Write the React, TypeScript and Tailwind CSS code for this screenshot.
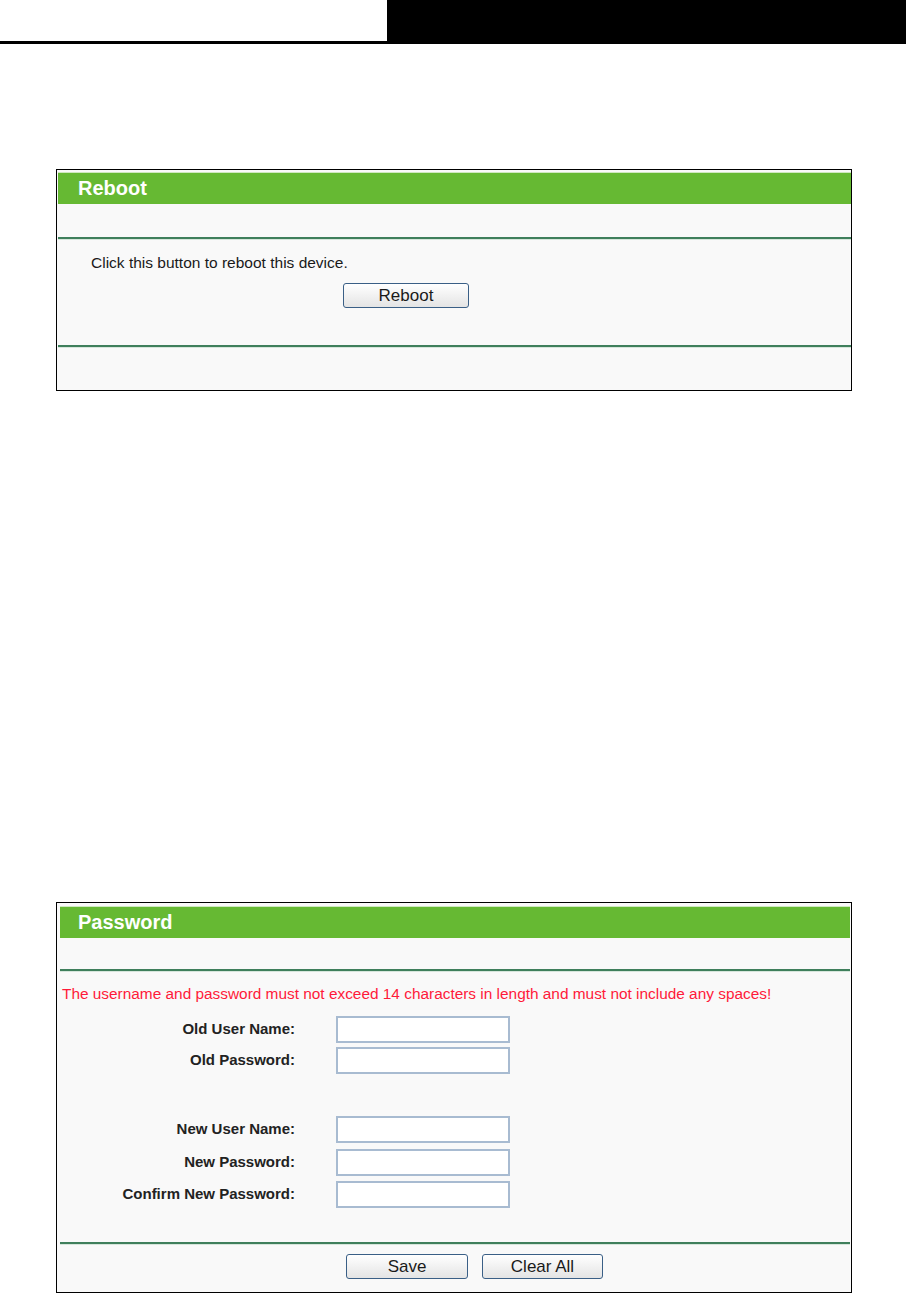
import React from "react";

const font = { fontFamily: '"Liberation Sans", Arial, sans-serif' };

function Rule() {
  return <div className="h-[3px] border-t-2 border-[#3f7f5c] bg-[#d7e6dc]" />;
}

function Button({ label, w }: { label: string; w: string }) {
  return (
    <button
      className={`${w} h-[25px] rounded-[3px] border border-[#3a5f86] bg-gradient-to-b from-white to-[#e4e4e4] text-[17px] leading-none text-[#1a1a1a]`}
    >
      {label}
    </button>
  );
}

function Field({ label }: { label: string }) {
  return (
    <div className="flex items-center h-[27px]">
      <div className="w-[235px] text-right text-[15px] font-bold text-[#222]">{label}</div>
      <input className="ml-[41px] w-[174px] h-[27px] border-2 border-[#a8bbd1] bg-white outline-none" />
    </div>
  );
}

export default function App() {
  return (
    <div className="bg-white w-[906px] h-[1293px]" style={font}>
      {/* top page header bar */}
      <div className="flex h-[44px]">
        <div className="w-[387px] h-full border-b-[3px] border-black" />
        <div className="flex-1 bg-black" />
      </div>

      {/* Reboot panel */}
      <div className="ml-[56px] mt-[125px] w-[796px] h-[222px] border border-black bg-[#f9f9f9] pt-[2px] pl-[1px]">
        <div className="h-[32px] bg-[#66b933] border-t border-[#cfe8bf] pl-[20px] pb-[2px] flex items-center text-[20px] font-bold text-white">
          Reboot
        </div>
        <div className="h-[33px]" />
        <Rule />
        <div className="pl-[33px] pt-[14px] text-[15.5px] leading-[17px] text-[#1a1a1a]">Click this button to reboot this device.</div>
        <div className="pl-[285px] pt-[12px]">
          <Button label="Reboot" w="w-[126px]" />
        </div>
        <div className="h-[37px]" />
        <Rule />
      </div>

      {/* Password panel */}
      <div className="ml-[56px] mt-[511px] w-[796px] h-[391px] border border-black bg-[#f9f9f9] pt-[3px] pl-[3px] pr-[1px]">
        <div className="h-[32px] bg-[#66b933] border-t border-[#cfe8bf] pl-[18px] pb-[2px] flex items-center text-[20px] font-bold text-white">
          Password
        </div>
        <div className="h-[31px]" />
        <Rule />
        <div className="pl-[2px] pt-[13px] text-[15.4px] leading-[17px] text-[#ff1a3a]">
          The username and password must not exceed 14 characters in length and must not include any spaces!
        </div>
        <div className="pt-[14px] flex flex-col gap-[4px]">
          <Field label="Old User Name:" />
          <Field label="Old Password:" />
        </div>
        <div className="pt-[42px] flex flex-col gap-[5.5px]">
          <Field label="New User Name:" />
          <Field label="New Password:" />
          <Field label="Confirm New Password:" />
        </div>
        <div className="h-[34px]" />
        <Rule />
        <div className="flex pl-[286px] gap-[14px] pt-[9px]">
          <Button label="Save" w="w-[122px]" />
          <Button label="Clear All" w="w-[121px]" />
        </div>
      </div>
    </div>
  );
}
